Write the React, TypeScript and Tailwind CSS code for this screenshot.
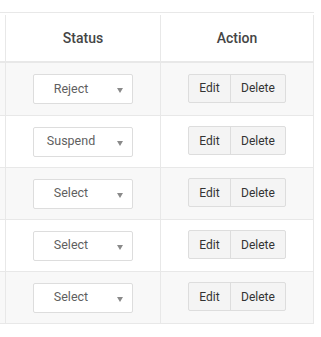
import React from 'react';

const rows = [
  { status: 'Reject', striped: true },
  { status: 'Suspend', striped: false },
  { status: 'Select', striped: true },
  { status: 'Select', striped: false },
  { status: 'Select', striped: true },
];

const StatusSelect = ({ value }: { value: string }) => (
  <div className="relative flex h-[30px] w-[100px] items-center rounded-[2px] border border-[#dddddd] bg-white">
    <span className="flex-1 pr-[24px] text-center text-[12.5px] text-[#5f5f5f]">{value}</span>
    <svg className="absolute right-[9px] top-[13px]" width="6" height="5" viewBox="0 0 6 5">
      <path d="M0 0 L6 0 L3 5 Z" fill="#8a8a8a" />
    </svg>
  </div>
);

const ActionButtons = () => (
  <div className="flex h-[29px] overflow-hidden rounded-[2px] border border-[#dddddd] bg-[#f4f4f4] text-[12px] text-[#333333]">
    <button className="w-[42px] border-r border-[#dddddd]">Edit</button>
    <button className="w-[54px]">Delete</button>
  </div>
);

export default function App() {
  return (
    <div className="h-[337px] w-[321px] bg-white pt-[12px]" style={{ fontFamily: 'Roboto, "Liberation Sans", sans-serif' }}>
      <div className="w-[314px]">
        {/* header */}
        <div className="flex h-[51px] border-t border-b-2 border-[#e8e8e8] bg-white pt-[2px] text-[14px] font-medium text-[#454545]">
          <div className="w-[6px] border-r border-[#e8e8e8]" />
          <div className="flex w-[155px] items-center justify-center border-r border-[#e8e8e8]">Status</div>
          <div className="flex w-[153px] items-center justify-center border-r border-[#e8e8e8]">Action</div>
        </div>
        {rows.map((row, i) => (
          <div
            key={i}
            className={`flex border-b border-[#e8e8e8] ${i === 0 ? 'h-[53px]' : 'h-[52px]'} ${
              row.striped ? 'bg-[#f8f8f8]' : 'bg-white'
            }`}
          >
            <div className="w-[6px] border-r border-[#e8e8e8]" />
            <div className="flex w-[155px] items-center justify-center border-r border-[#e8e8e8]">
              <StatusSelect value={row.status} />
            </div>
            <div className="flex w-[153px] items-center justify-center border-r border-[#e8e8e8] pb-[2px]">
              <ActionButtons />
            </div>
          </div>
        ))}
      </div>
    </div>
  );
}
